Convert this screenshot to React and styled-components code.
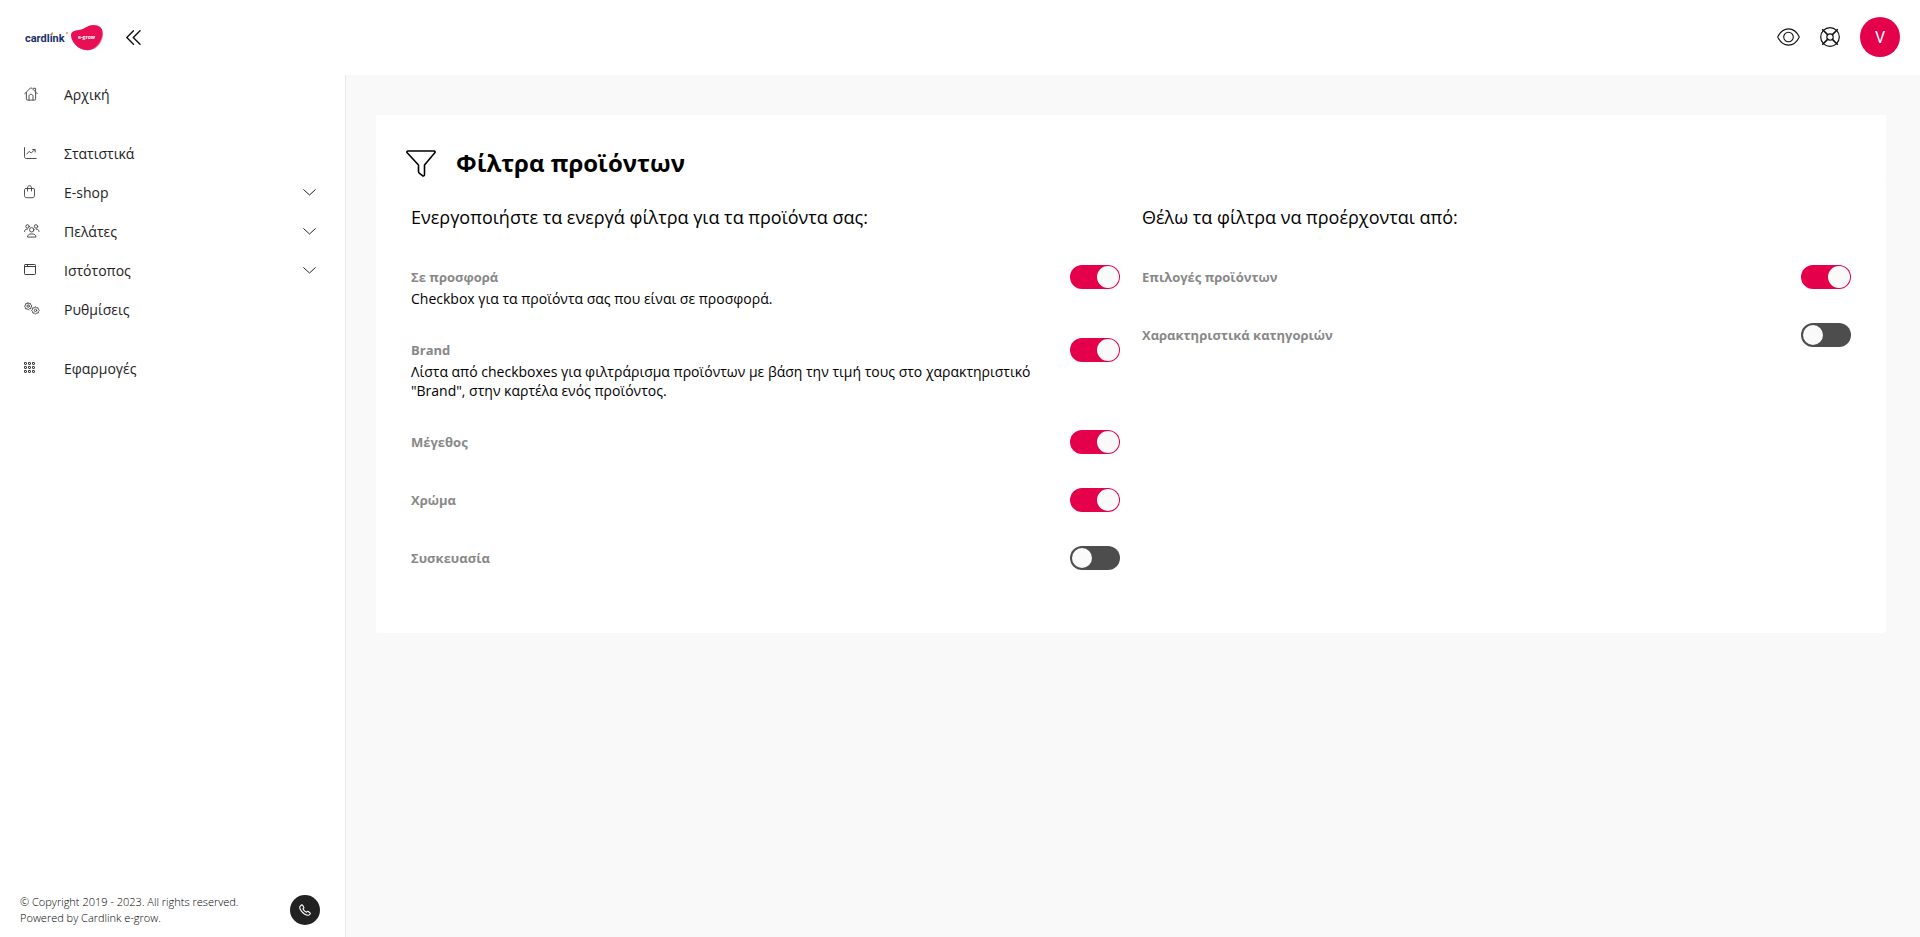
import React, { useState } from "react";
import styled, { createGlobalStyle } from "styled-components";

const GlobalStyle = createGlobalStyle`
  *, *::before, *::after { box-sizing: border-box; }
  body {
    margin: 0;
    background: #f9f9f9;
    color: #000;
    font-family: "Open Sans", "Noto Sans", sans-serif;
    font-size: 14px;
  }
  button { font: inherit; color: inherit; border: 0; padding: 0; background: none; cursor: pointer; }
  a { color: inherit; text-decoration: none; }
  h1, h2, p, ul { margin: 0; padding: 0; }
  ul { list-style: none; }
  svg { display: block; flex: none; }
`;

const Page = styled.div`
  min-height: 100vh;
  display: flex;
  flex-direction: column;
`;

const TopBar = styled.header`
  height: 75px;
  padding: 0 20px 1px 24px;
  display: flex;
  align-items: center;
  justify-content: space-between;
  background: #fff;
`;

const TopGroup = styled.div`
  display: flex;
  align-items: center;
  gap: ${(p) => p.$gap}px;
`;

const IconButton = styled.button`
  display: flex;
  color: #111;
`;

const Avatar = styled.button`
  width: 40px;
  height: 40px;
  border-radius: 50%;
  background: #e4004b;
  color: #fff;
  font-family: Roboto, sans-serif;
  font-size: 16px;
`;

const Body = styled.div`
  flex: 1;
  display: flex;
`;

const Sidebar = styled.aside`
  width: 346px;
  flex: none;
  display: flex;
  flex-direction: column;
  justify-content: space-between;
  background: #fff;
  border-right: 1px solid #e9e9e9;
`;

const MenuGroup = styled.ul`
  margin-bottom: 20px;
`;

const MenuLink = styled.a`
  height: 39px;
  padding: 0 29px 0 24px;
  display: flex;
  align-items: center;
  color: #222;
`;

const MenuIcon = styled.span`
  width: 40px;
  flex: none;
  padding-bottom: 2px;
  color: #3d3d3d;
`;

const MenuLabel = styled.span`
  flex: 1;
`;

const SideFooter = styled.footer`
  padding: 0 25px 11px 20px;
  display: flex;
  align-items: center;
  justify-content: space-between;
`;

const Copyright = styled.p`
  font-size: 11px;
  font-weight: 300;
  line-height: 16px;
`;

const PhoneButton = styled.button`
  width: 30px;
  height: 30px;
  border-radius: 50%;
  display: flex;
  align-items: center;
  justify-content: center;
  background: #222;
  color: #fff;
`;

const Main = styled.main`
  flex: 1;
  min-width: 0;
  padding: 40px 34px 40px 30px;
`;

const CardHeader = styled.div`
  height: 66px;
  padding: 30px 30px 0;
  display: flex;
  align-items: center;
  gap: 20px;
  background: #fff;
`;

const Title = styled.h1`
  font-size: 24px;
  font-weight: 700;
  line-height: 32px;
`;

const CardBody = styled.div`
  padding: 20px 35px 59px;
  display: grid;
  grid-template-columns: 1fr 1fr;
  gap: 22px;
  background: #fff;
  border-radius: 4px;
`;

const SubTitle = styled.h2`
  margin-bottom: 32px;
  font-size: 18px;
  font-weight: 400;
  line-height: 32px;
`;

const Settings = styled.ul`
  display: flex;
  flex-direction: column;
  gap: 30px;
`;

const Setting = styled.li`
  min-height: 28px;
  display: flex;
  justify-content: space-between;
  align-items: flex-start;
  gap: 30px;
`;

const SettingText = styled.div`
  max-width: 640px;
`;

const SettingLabel = styled.label`
  display: block;
  color: #888;
  font-size: 13px;
  font-weight: 700;
  line-height: 24px;
`;

const SettingNote = styled.p`
  font-size: 14px;
  line-height: 19px;
`;

const Switch = styled.input`
  appearance: none;
  flex: none;
  width: 50px;
  height: 24px;
  margin: 0;
  padding: 2px;
  border-radius: 12px;
  display: flex;
  align-items: center;
  background: #4d4d4d;
  cursor: pointer;

  &::before {
    content: "";
    width: 20px;
    height: 20px;
    border-radius: 50%;
    background: #fafafa;
  }

  &:checked {
    padding: 1px;
    justify-content: flex-end;
    background: #e4004b;
  }

  &:checked::before {
    width: 22px;
    height: 22px;
  }
`;

const Stroke = ({ w, h = w, box, width = 1, children }) => (
  <svg
    width={w}
    height={h}
    viewBox={box || `0 0 ${w} ${h}`}
    fill="none"
    stroke="currentColor"
    strokeWidth={width}
    strokeLinecap="round"
    strokeLinejoin="round"
    aria-hidden="true"
  >
    {children}
  </svg>
);

const Logo = () => (
  <svg width="80" height="27" viewBox="0 0 80 27" role="img" aria-label="cardlink e-grow">
    <text x="1" y="18" fontFamily="Roboto, sans-serif" fontSize="11" fontWeight="700" fill="#1b2f6b">
      cardlink
    </text>
    <path d="M27 10.600v-1.400l2-1.200v2.600zM42 10.400l.3-1.800 2-.6-.6 1.400z" fill="#f08a24" />
    <path d="M79 9c.4 6-3 13-9 16-2 1-5 1.500-8 1 7-3 13-9 15.500-18z" fill="#f48aac" />
    <path d="M47 11.500c0-4 3-4.800 8-5.500C61 5.200 63 1.200 69 1c6-.2 9.600 3 9.600 7.200 0 8-6 18-15.600 18C54 26.200 47 17.500 47 11.500z" fill="#e80f55" />
    <text x="54" y="15" fontFamily="Open Sans, sans-serif" fontSize="5" fontWeight="700" fill="#fff">
      e-grow
    </text>
  </svg>
);

const DoubleLeft = () => (
  <Stroke w={15} h={15} width={1.4}>
    <path d="M7.500 .8L.8 7.500l6.700 6.700M14 .8L7.300 7.500 14 14.200" />
  </Stroke>
);

const Eye = () => (
  <Stroke w={23} h={18} width={1.1}>
    <path d="M.7 9C3 4.200 7 .9 11.500 .9S20 4.200 22.300 9C20 13.800 16 17.100 11.500 17.100S3 13.800 .7 9z" />
    <circle cx="11.500" cy="9" r="4.800" />
  </Stroke>
);

const Support = () => (
  <Stroke w={20} width={1.2}>
    <circle cx="10" cy="10" r="9.300" />
    <circle cx="10" cy="10" r="3.200" />
    <path d="M2.700 2.700l4.900 4.900M17.300 2.700l-4.900 4.900M2.700 17.300l4.900-4.900M17.300 17.300l-4.900-4.900" strokeWidth="1.600" />
  </Stroke>
);

const Funnel = () => (
  <Stroke w={30} h={27} width={1.6}>
    <path d="M2 1h26c1 0 1.500 1 .8 1.800L18.500 15v9.500c0 1.300-1 1.800-2 1.200l-2.700-2c-.8-.6-1.300-1.200-1.300-2.200V15L1.200 2.800C.5 2 1 1 2 1z" />
  </Stroke>
);

const Home = () => (
  <Stroke w={14} h={14} width={0.9}>
    <path d="M.6 6.800L6 1.400c.6-.5 1.400-.5 2 0l5.400 5.400M2.400 5.400v6.500c0 .8.4 1.200 1.200 1.200h6.800c.8 0 1.200-.4 1.200-1.200V5.400M9.200 1.300h2.400v3M5 13V9.300C5 8 5.800 7.300 7 7.300S9 8 9 9.300V13" />
  </Stroke>
);

const Chart = () => (
  <Stroke w={13} h={12} width={0.9}>
    <path d="M.5 .6v9c0 1.200.6 1.900 1.800 1.900h9.900M2.800 7l2.400-2.600 2 1.600 3.600-3.400M8.600 2.500h2.600V5" />
  </Stroke>
);

const Bag = () => (
  <Stroke w={12} h={14} width={0.9}>
    <path d="M2 3.500h7.200c.9 0 1.300.4 1.300 1.300v5.500c0 1.600-.8 2.400-2.400 2.400H2.900C1.300 12.700.5 11.900.5 10.300V4.800c0-.9.6-1.300 1.500-1.300zM3.500 6V3C3.500 1.600 4.200.7 5.500.7S7.500 1.600 7.500 3v3" />
  </Stroke>
);

const People = () => (
  <Stroke w={16} h={14} width={0.9}>
    <circle cx="3.500" cy="2.400" r="1.700" />
    <circle cx="12" cy="2.400" r="1.700" />
    <circle cx="7.700" cy="5.800" r="2.200" />
    <path d="M.5 7.500c0-1.600 1-2.400 2.800-2.400M15 7.500c0-1.600-1-2.400-2.800-2.400M3.500 12.700C3.500 11 5 9.900 7.700 9.900s4.300 1.100 4.300 2.800z" />
  </Stroke>
);

const Browser = () => (
  <Stroke w={13} h={12} width={1}>
    <rect x="0.500" y="0.500" width="11" height="10" rx="0.800" />
    <path d="M.6 2.500h10.800M3.500 .8v1.700" />
  </Stroke>
);

const Gears = () => (
  <Stroke w={16} h={13} width={0.9}>
    <path d="M4 .7l1 1 1.500-.2.300 1.400 1.100 1-.9 1.200L7 6.500l-1.400.2L4.300 7.600 3 6.800l-1.500 0-.2-1.400L.6 4.200l.9-1.200.2-1.400 1.400 0z" />
    <circle cx="4.200" cy="4.100" r="1.200" />
    <path d="M11.400 4.900l1.200.9 1.400 0 .3 1.400 1 1.200-.9 1.200-.1 1.400-1.500.1-1.200.9-1.200-.9-1.500 0-.2-1.400-1-1.200.9-1.200.1-1.400 1.500-.1z" />
    <circle cx="11.500" cy="8.400" r="1.200" />
  </Stroke>
);

const Grid = () => (
  <Stroke w={12} h={12} width={1}>
    {[0, 4, 8].map((y) => [0, 4, 8].map((x) => (
      <rect key={`${x}-${y}`} x={x + 0.5} y={y + 0.5} width="2" height="2" rx="0.500" />
    )))}
  </Stroke>
);

const ChevronDown = () => (
  <Stroke w={13} h={7} width={1}>
    <path d="M.7 .7l5.800 5.300L12.300 .7" />
  </Stroke>
);

const Phone = () => (
  <Stroke w={12} h={12} width={1.1}>
    <path d="M2.500 1L1.300 2.200C.4 3.100.6 4.900 2.600 7.400s4.800 4 6.800 3.800c.6-.1 1.200-.5 1.700-1.200.3-.4.2-.8-.1-1.100L9.300 7.500c-.4-.3-.8-.3-1.200.1l-.7.700C6 7.600 4.800 6.400 4 4.900l.6-.7c.4-.4.4-.8.1-1.200L3.500 1.100C3.200.7 2.800.7 2.500 1z" />
  </Stroke>
);

const menu = [
  [{ label: "Αρχική", Icon: Home }],
  [
    { label: "Στατιστικά", Icon: Chart },
    { label: "E-shop", Icon: Bag, nested: true },
    { label: "Πελάτες", Icon: People, nested: true },
    { label: "Ιστότοπος", Icon: Browser, nested: true },
    { label: "Ρυθμίσεις", Icon: Gears },
  ],
  [{ label: "Εφαρμογές", Icon: Grid }],
];

const filters = [
  { id: "offer", label: "Σε προσφορά", note: "Checkbox για τα προϊόντα σας που είναι σε προσφορά.", on: true },
  {
    id: "brand",
    label: "Brand",
    note: "Λίστα από checkboxes για φιλτράρισμα προϊόντων με βάση την τιμή τους στο χαρακτηριστικό \"Brand\", στην καρτέλα ενός προϊόντος.",
    on: true,
  },
  { id: "size", label: "Μέγεθος", on: true },
  { id: "color", label: "Χρώμα", on: true },
  { id: "packaging", label: "Συσκευασία", on: false },
];

const sources = [
  { id: "options", label: "Επιλογές προϊόντων", on: true },
  { id: "categories", label: "Χαρακτηριστικά κατηγοριών", on: false },
];

function SettingRow({ id, label, note, on }) {
  const [checked, setChecked] = useState(on);
  return (
    <Setting>
      <SettingText>
        <SettingLabel htmlFor={id}>{label}</SettingLabel>
        {note && <SettingNote>{note}</SettingNote>}
      </SettingText>
      <Switch id={id} type="checkbox" checked={checked} onChange={(e) => setChecked(e.target.checked)} />
    </Setting>
  );
}

function SettingColumn({ title, items }) {
  return (
    <section>
      <SubTitle>{title}</SubTitle>
      <Settings>
        {items.map((item) => (
          <SettingRow key={item.id} {...item} />
        ))}
      </Settings>
    </section>
  );
}

export default function App() {
  return (
    <Page>
      <GlobalStyle />
      <TopBar>
        <TopGroup $gap={22}>
          <a href="#home">
            <Logo />
          </a>
          <IconButton aria-label="Collapse menu">
            <DoubleLeft />
          </IconButton>
        </TopGroup>
        <TopGroup $gap={20}>
          <IconButton aria-label="Preview">
            <Eye />
          </IconButton>
          <IconButton aria-label="Support">
            <Support />
          </IconButton>
          <Avatar>V</Avatar>
        </TopGroup>
      </TopBar>
      <Body>
        <Sidebar>
          <nav>
            {menu.map((group, i) => (
              <MenuGroup key={i}>
                {group.map(({ label, Icon, nested }) => (
                  <li key={label}>
                    <MenuLink href="#menu">
                      <MenuIcon>
                        <Icon />
                      </MenuIcon>
                      <MenuLabel>{label}</MenuLabel>
                      {nested && <ChevronDown />}
                    </MenuLink>
                  </li>
                ))}
              </MenuGroup>
            ))}
          </nav>
          <SideFooter>
            <Copyright>
              © Copyright 2019 - 2023. All rights reserved.
              <br />
              Powered by Cardlink e-grow.
            </Copyright>
            <PhoneButton aria-label="Call us">
              <Phone />
            </PhoneButton>
          </SideFooter>
        </Sidebar>
        <Main>
          <CardHeader>
            <Funnel />
            <Title>Φίλτρα προϊόντων</Title>
          </CardHeader>
          <CardBody>
            <SettingColumn title="Ενεργοποιήστε τα ενεργά φίλτρα για τα προϊόντα σας:" items={filters} />
            <SettingColumn title="Θέλω τα φίλτρα να προέρχονται από:" items={sources} />
          </CardBody>
        </Main>
      </Body>
    </Page>
  );
}
